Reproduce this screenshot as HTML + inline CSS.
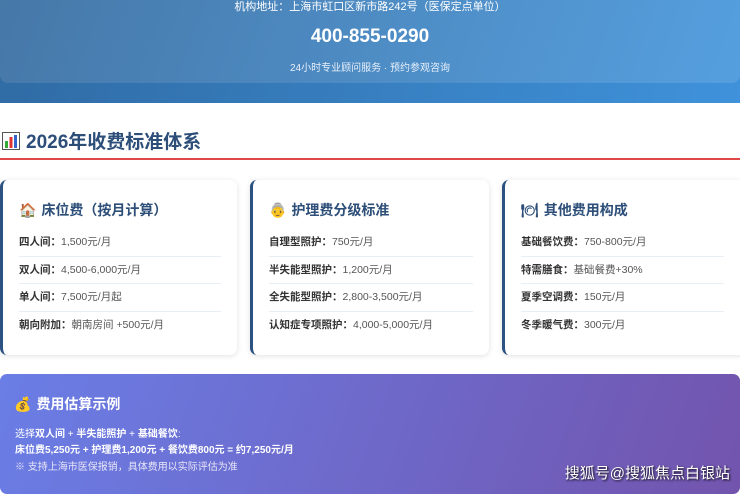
<!DOCTYPE html>
<html><head><meta charset="utf-8"><style>
*{margin:0;padding:0;box-sizing:border-box}
body{width:740px;height:488px;overflow:hidden;background:#fff;font-family:"Liberation Sans","Noto Sans CJK SC",sans-serif;position:relative}
.hdr{position:absolute;left:0;top:0;width:740px;height:103px;background:linear-gradient(110deg,#2f6aa3,#3f92db)}
.hin{position:absolute;left:0;top:-10px;width:740px;height:93px;border-radius:0 0 8px 8px;background:linear-gradient(110deg,#4678a8,#559fdf);text-align:center;color:#fff}
.addr{position:absolute;top:8px;width:100%;font-size:11px}
.tel{position:absolute;top:36px;width:100%;font-size:19px;font-weight:bold}
.sub{position:absolute;top:69px;width:100%;font-size:10px;color:#e8f0fa}
.title{position:absolute;left:2px;top:127px;font-size:19px;font-weight:bold;color:#2c4e78;display:flex;align-items:center;gap:6px}
.line{position:absolute;left:0;top:158px;width:740px;height:2px;background:#e04848}
.card{position:absolute;top:180px;height:175px;background:#fff;border-radius:7px;border-left:3px solid #2c5282;box-shadow:0 1px 6px rgba(0,0,0,.12)}
.card h3{position:absolute;left:16px;top:20px;font-size:14px;color:#2c4e78;display:flex;align-items:center;gap:5px}
.rows{position:absolute;left:16px;top:49px;right:16px}
.row{height:27.5px;line-height:26px;font-size:10.5px;color:#555;border-bottom:1px solid #e8eef5}
.row:last-child{border-bottom:none}
.row b{color:#333}
.bot{position:absolute;left:0;top:374px;width:740px;height:120px;border-radius:7px;background:linear-gradient(110deg,#6a7ee6,#7254ad);color:#fff}
.bot h3{position:absolute;left:14px;top:20px;font-size:14px;display:flex;align-items:center;gap:5px}
.bot .t{position:absolute;left:15px;font-size:10px}
.wm{position:absolute;right:10px;top:88px;font-size:15px;color:#fff;text-shadow:1px 1px 2px #000}
</style></head><body>
<div class="hdr"><div class="hin">
<div class="addr">机构地址：上海市虹口区新市路242号（医保定点单位）</div>
<div class="tel">400-855-0290</div>
<div class="sub">24小时专业顾问服务 · 预约参观咨询</div>
</div></div>
<div class="title"><svg width="18" height="18" viewBox="0 0 18 18"><rect x=".5" y=".5" width="17" height="17" fill="#fff" stroke="#555"/><rect x="3" y="9" width="3" height="7" fill="#3a3"/><rect x="7.5" y="5" width="3" height="11" fill="#d33"/><rect x="12" y="3" width="3" height="13" fill="#36c"/></svg>2026年收费标准体系</div>
<div class="line"></div>
<div class="card" style="left:0;width:237px"><h3><span>🏠</span>床位费（按月计算）</h3><div class="rows">
<div class="row"><b>四人间：</b>1,500元/月</div><div class="row"><b>双人间：</b>4,500-6,000元/月</div><div class="row"><b>单人间：</b>7,500元/月起</div><div class="row"><b>朝向附加：</b>朝南房间 +500元/月</div></div></div>
<div class="card" style="left:250px;width:239px"><h3><span>👵</span>护理费分级标准</h3><div class="rows">
<div class="row"><b>自理型照护：</b>750元/月</div><div class="row"><b>半失能型照护：</b>1,200元/月</div><div class="row"><b>全失能型照护：</b>2,800-3,500元/月</div><div class="row"><b>认知症专项照护：</b>4,000-5,000元/月</div></div></div>
<div class="card" style="left:502px;width:245px"><h3><span>🍽</span>其他费用构成</h3><div class="rows" style="right:23px">
<div class="row"><b>基础餐饮费：</b>750-800元/月</div><div class="row"><b>特需膳食：</b>基础餐费+30%</div><div class="row"><b>夏季空调费：</b>150元/月</div><div class="row"><b>冬季暖气费：</b>300元/月</div></div></div>
<div class="bot"><h3><span>💰</span>费用估算示例</h3>
<div class="t" style="top:51px">选择<b>双人间</b> + <b>半失能照护</b> + <b>基础餐饮</b>:</div>
<div class="t" style="top:67px;font-weight:bold">床位费5,250元 + 护理费1,200元 + 餐饮费800元 = 约7,250元/月</div>
<div class="t" style="top:84px;color:#e8e6f8">※ 支持上海市医保报销，具体费用以实际评估为准</div>
<div class="wm">搜狐号@搜狐焦点白银站</div></div>
</body></html>
